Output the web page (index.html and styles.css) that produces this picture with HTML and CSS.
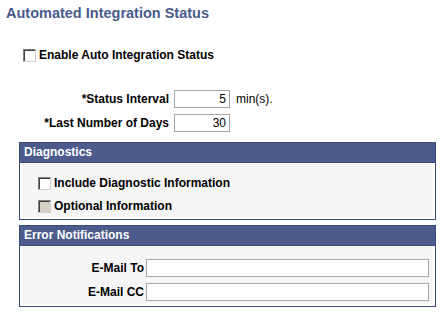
FILE: index.html
```html
<!DOCTYPE html>
<html>
<head>
<meta charset="utf-8">
<link rel="stylesheet" href="styles.css">
</head>
<body>
<div class="page">
  <h1 class="title">Automated Integration Status</h1>
  <div class="check-row enable">
    <span class="cb"></span><span class="cb-label">Enable Auto Integration Status</span>
  </div>
  <div class="fields">
    <div class="flabel">*Status Interval</div>
    <div class="fval"><span class="num">5</span><span class="unit">min(s).</span></div>
    <div class="flabel">*Last Number of Days</div>
    <div class="fval"><span class="num">30</span></div>
  </div>
  <div class="group diag">
    <div class="ghead">Diagnostics</div>
    <div class="gbody">
      <div class="check-row"><span class="cb"></span><span class="cb-label">Include Diagnostic Information</span></div>
      <div class="check-row"><span class="cb disabled"></span><span class="cb-label">Optional Information</span></div>
    </div>
  </div>
  <div class="group err">
    <div class="ghead">Error Notifications</div>
    <div class="gbody">
      <div class="mail">
        <div class="mlabel">E-Mail To</div><div class="mbox"></div>
        <div class="mlabel">E-Mail CC</div><div class="mbox"></div>
      </div>
    </div>
  </div>
</div>
</body>
</html>
```
FILE: styles.css
```css
html, body { margin: 0; padding: 0; background: #fff; }
body { font-family: "Liberation Sans", Arial, sans-serif; font-size: 12px; color: #000; }
.page { width: 443px; height: 312px; overflow: hidden; }
.title { margin: 0; padding: 4px 0 0 6px; font-size: 14.5px; font-weight: bold; color: #4a5a8c; line-height: 18px; }
.check-row { display: flex; align-items: center; height: 14px; }
.cb { width: 11px; height: 11px; border: 1px solid; border-color: #808080 #d4d0c8 #d4d0c8 #808080; box-shadow: inset 1px 1px 0 #404040; background: #fff; flex: none; }
.cb.disabled { background: #d4d0c8; }
.cb-label { margin-left: 3px; font-weight: bold; font-size: 12px; }
.enable { margin: 26px 0 0 23px; }
.fields { display: grid; grid-template-columns: 174px auto; row-gap: 6px; margin-top: 28px; align-items: center; }
.flabel { text-align: right; font-weight: bold; padding-right: 5px; }
.fval { display: flex; align-items: center; }
.num { display: block; width: 51px; height: 16px; border: 1px solid #a6a6a6; text-align: right; padding: 0 3px 0 0; line-height: 16px; background: #fff; }
.unit { margin-left: 6px; }
.group { margin-left: 19px; width: 415px; border: 1px solid #3c4a7a; }
.diag { margin-top: 10px; }
.err { margin-top: 5px; }
.ghead { background: #4c5a8c; color: #fff; font-weight: bold; height: 19px; line-height: 19px; padding-left: 4px; border-bottom: 1px solid #3c4a7a; }
.gbody { background: #f5f5f5; border: 2px solid #fff; border-top: 0; }
.diag .gbody { padding: 13px 0 2px 16px; display: flex; flex-direction: column; gap: 9px; height: 39px; box-sizing: content-box; }
.err .gbody { padding: 13px 0 3px 0; }
.mail { display: grid; grid-template-columns: 124px 283px; row-gap: 6px; align-items: center; }
.mlabel { text-align: right; font-weight: bold; padding-right: 2px; }
.mbox { height: 16px; border: 1px solid #a6a6a6; background: #fff; }
```
